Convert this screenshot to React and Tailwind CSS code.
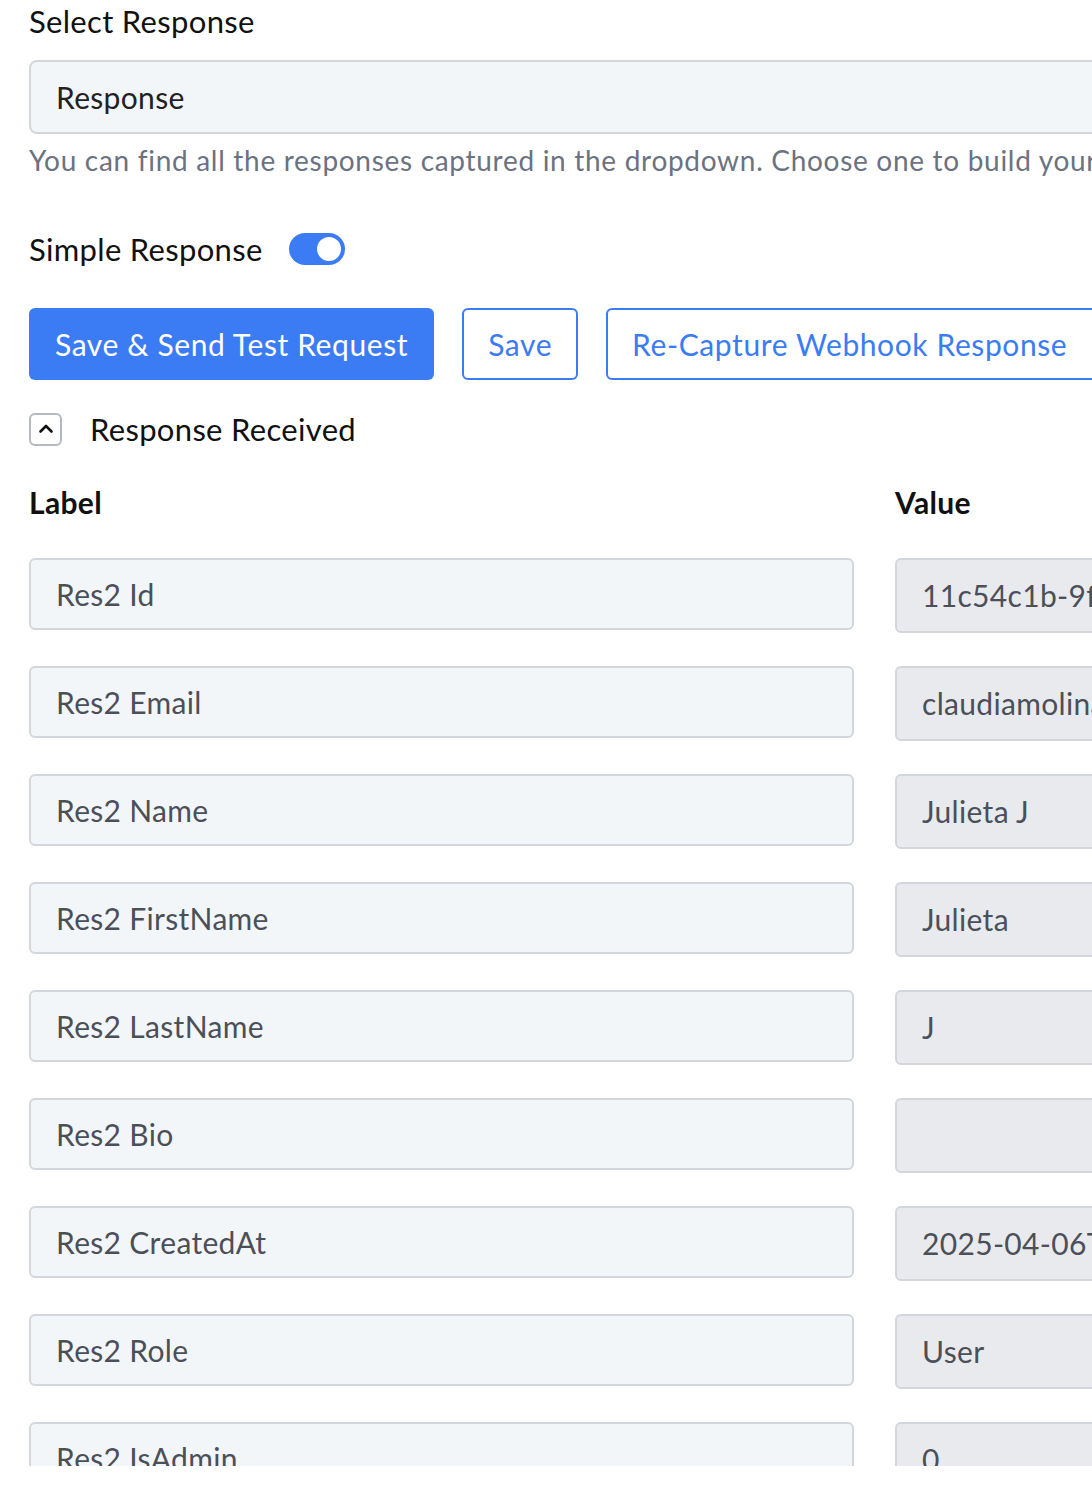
import { useState } from "react";

const rows = [
  ["Res2 Id", "11c54c1b-9f3a-4d2e-8b61-5a7e2c0d9f14"],
  ["Res2 Email", "claudiamolina@example.com"],
  ["Res2 Name", "Julieta J"],
  ["Res2 FirstName", "Julieta"],
  ["Res2 LastName", "J"],
  ["Res2 Bio", ""],
  ["Res2 CreatedAt", "2025-04-06T10:24:31.000Z"],
  ["Res2 Role", "User"],
  ["Res2 IsAdmin", "0"],
];

function ChevronUp() {
  return (
    <svg width="18" height="18" viewBox="0 0 18 18" fill="none">
      <path d="M3.5 11.5 9 6l5.5 5.5" stroke="#111" strokeWidth="2.6" strokeLinecap="round" strokeLinejoin="round" />
    </svg>
  );
}

export default function App() {
  const [simple, setSimple] = useState(true);
  const [open, setOpen] = useState(true);

  return (
    <div className="h-[1466px] overflow-hidden bg-white" style={{ fontFamily: "Lato, 'Noto Sans', sans-serif" }}>
      <div className="w-[1700px] pl-[29px] text-[#111] tracking-[0.02em]">
        <div className="h-[42px] leading-[42px] text-[31px]">Select Response</div>

        {/* response dropdown */}
        <div className="mt-[18px] w-[1300px] h-[74px] flex items-center px-[25px] bg-[#f3f6f9] border-2 border-[#d3d6da] rounded-[8px] text-[30px] text-[#222]">
          Response
        </div>
        <p className="mt-[8px] leading-[36px] text-[28px] tracking-[0.025em] text-[#6b7280] whitespace-nowrap">
          You can find all the responses captured in the dropdown. Choose one to build your response.
        </p>

        <div className="mt-[54px] h-[34px] flex items-center gap-[26px]">
          <span className="text-[31px] leading-[34px]">Simple Response</span>
          <button
            onClick={() => setSimple(!simple)}
            className={`w-[56px] h-[32px] rounded-full flex items-center px-[4px] ${simple ? "bg-[#3b7cf5] justify-end" : "bg-gray-300 justify-start"}`}
          >
            <span className="w-[24px] h-[24px] rounded-full bg-white" />
          </button>
        </div>

        <div className="mt-[42px] flex items-center gap-[28px]">
          <button className="h-[72px] px-[26px] rounded-[6px] bg-[#3b7cf5] text-white text-[30px] tracking-[0.02em]">
            Save &amp; Send Test Request
          </button>
          <button className="h-[72px] px-[24px] rounded-[6px] border-2 border-[#3b7cf5] text-[#3b7cf5] text-[30px] tracking-[0.02em]">
            Save
          </button>
          <button className="h-[72px] pl-[24px] pr-[60px] rounded-[6px] border-2 border-[#3b7cf5] text-[#3b7cf5] text-[30px] tracking-[0.02em]">
            Re-Capture Webhook Response
          </button>
        </div>

        <div className="mt-[32px] h-[34px] flex items-center gap-[28px]">
          <button
            onClick={() => setOpen(!open)}
            className="w-[33px] h-[33px] flex items-center justify-center rounded-[6px] border-2 border-[#b4b9c1]"
          >
            <ChevronUp />
          </button>
          <span className="text-[31px] leading-[34px]">Response Received</span>
        </div>

        <div className="mt-[37px] grid grid-cols-[825px_825px] gap-x-[41px]">
          <div className="text-[30px] leading-[38px] font-bold">Label</div>
          <div className="text-[30px] leading-[38px] font-bold">Value</div>
        </div>

        {/* label/value rows */}
        <div className="mt-[37px] flex flex-col gap-[33px]">
          {rows.map(([label, value]) => (
            <div key={label} className="grid grid-cols-[825px_825px] gap-x-[41px] items-start">
              <div className="h-[72px] flex items-center px-[25px] bg-[#f3f6f9] border-2 border-[#d3d6da] rounded-[6px] text-[30px] text-[#4b5058]">
                {label}
              </div>
              <div className="h-[75px] flex items-center px-[25px] bg-[#e9eaee] border-2 border-[#d3d6da] rounded-[6px] text-[30px] text-[#4b5058] whitespace-nowrap">
                {value}
              </div>
            </div>
          ))}
        </div>
      </div>
    </div>
  );
}
